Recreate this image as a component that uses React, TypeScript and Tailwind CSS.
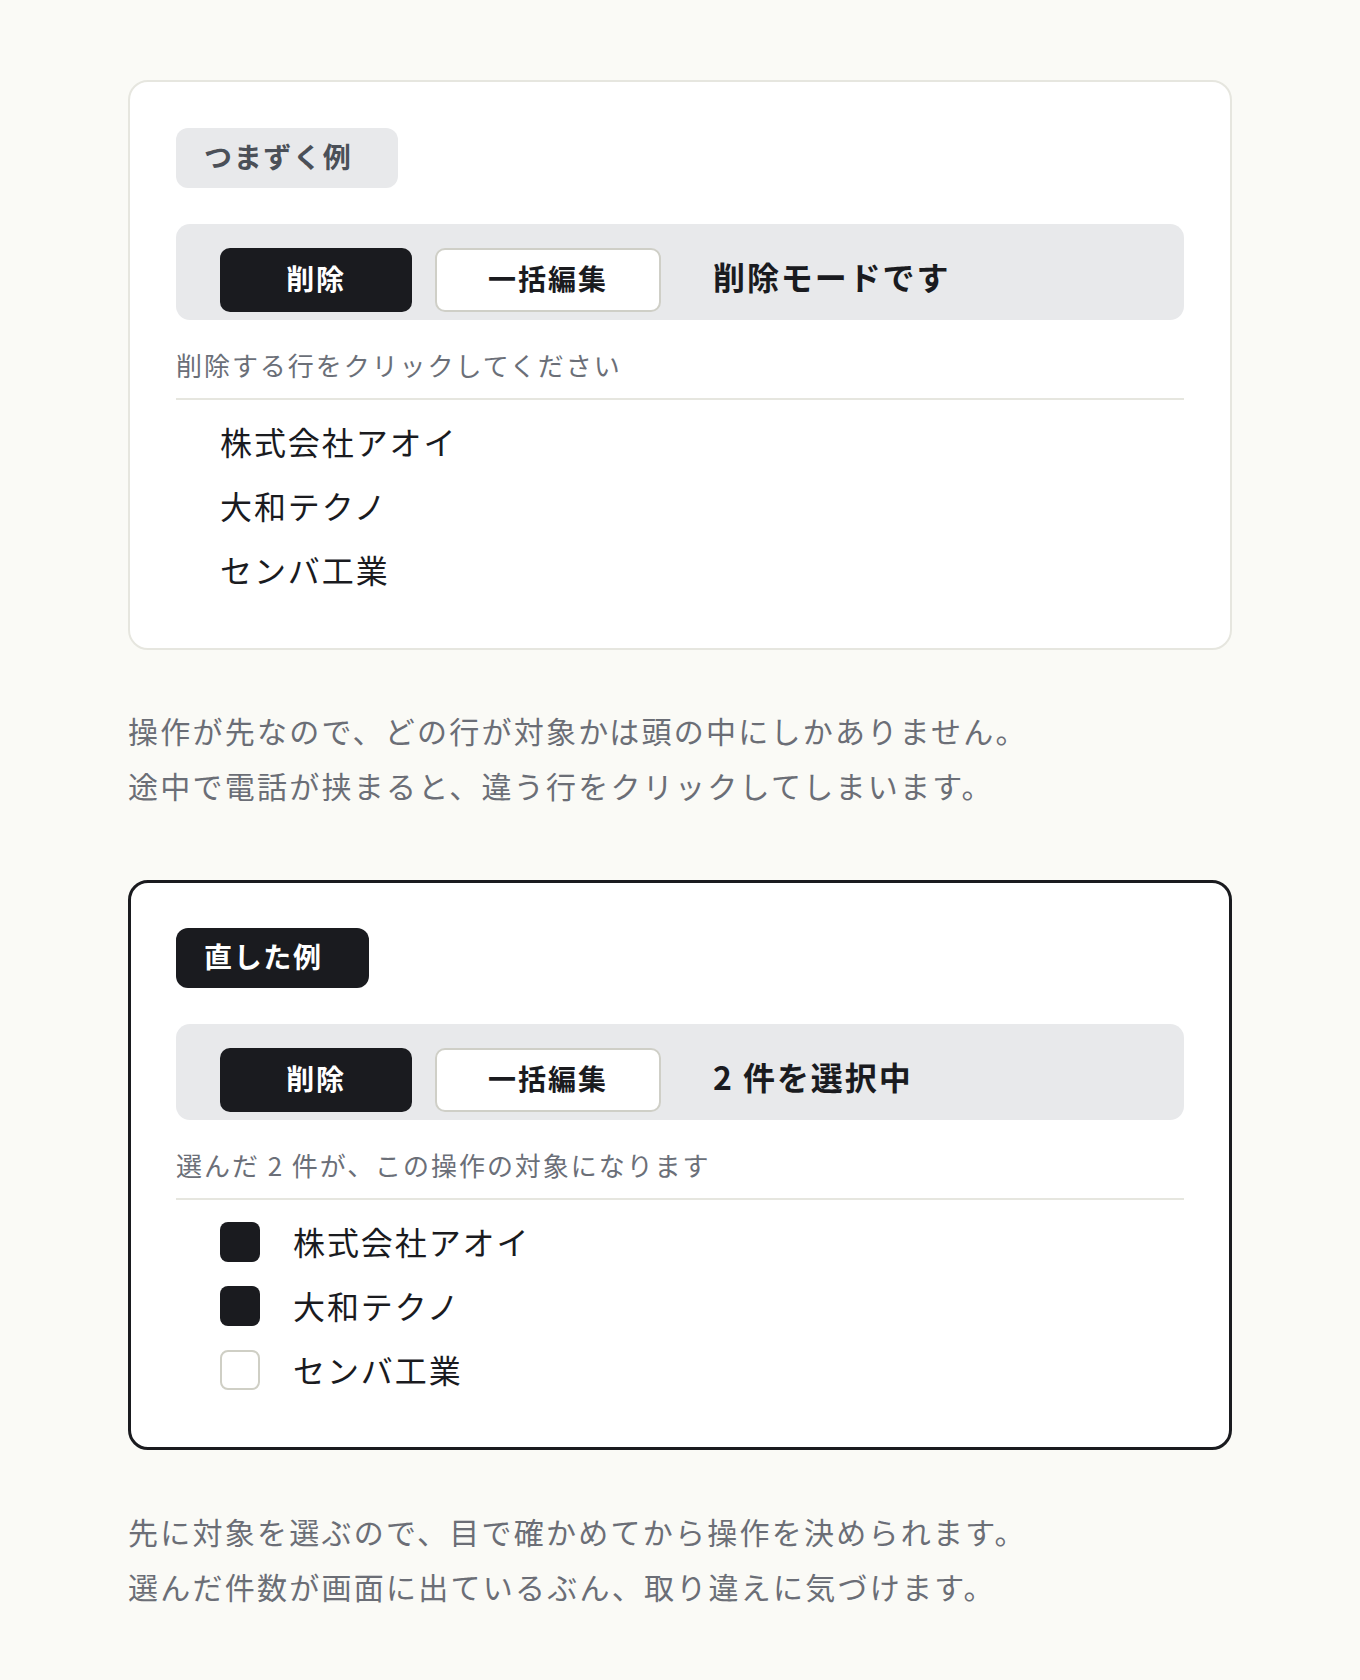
import { useState } from "react";

const companies = ["株式会社アオイ", "大和テクノ", "センバ工業"];

const Toolbar = ({ status }: { status: string }) => (
  <div className="flex items-center rounded-[14px] bg-[#e8e9eb] pl-[44px] pr-[44px] pt-[24px] pb-[8px]">
    <button className="h-[64px] w-[192px] rounded-[10px] bg-[#1a1b1f] pb-[4px] text-[28px] font-bold tracking-[0.06em] text-white">
      削除
    </button>
    <button className="ml-[23px] h-[64px] w-[226px] rounded-[10px] border-2 border-[#cfcfc7] bg-white pb-[4px] text-[28px] font-bold tracking-[0.07em] text-[#1a1b1f]">
      一括編集
    </button>
    <span className="ml-[52px] mb-[8px] text-[32px] font-bold tracking-[0.06em] text-[#1a1b1f]">{status}</span>
  </div>
);

const Before = () => (
  <div className="rounded-[20px] border-2 border-[#e6e6df] bg-white p-[46px]">
    <span className="inline-block h-[60px] rounded-[12px] bg-[#e8e9eb] pl-[28px] pr-[46px] text-[28px] font-bold leading-[56px] tracking-[0.06em] text-[#4b5058]">
      つまずく例
    </span>
    <div className="mt-[36px]">
      <Toolbar status="削除モードです" />
    </div>
    <p className="mt-[26px] border-b-2 border-[#e6e6df] pb-[14px] text-[26px] leading-[38px] tracking-[0.075em] text-[#6b6f78]">
      削除する行をクリックしてください
    </p>
    <ul className="pt-[10px] pl-[44px]">
      {companies.map((c) => (
        <li key={c} className="h-[64px] text-[32px] leading-[62px] tracking-[0.06em] text-[#1a1b1f]">
          {c}
        </li>
      ))}
    </ul>
  </div>
);

const After = () => {
  const [checked, setChecked] = useState<string[]>(["株式会社アオイ", "大和テクノ"]);

  const toggle = (c: string) =>
    setChecked((prev) => (prev.includes(c) ? prev.filter((x) => x !== c) : [...prev, c]));

  return (
    <div className="rounded-[20px] border-[3px] border-[#1a1b1f] bg-white p-[45px]">
      <span className="inline-block h-[60px] rounded-[12px] bg-[#1a1b1f] pl-[28px] pr-[46px] text-[28px] font-bold leading-[56px] tracking-[0.06em] text-white">
        直した例
      </span>
      <div className="mt-[36px]">
        <Toolbar status={`${checked.length} 件を選択中`} />
      </div>
      <p className="mt-[26px] border-b-2 border-[#e6e6df] pb-[14px] text-[26px] leading-[38px] tracking-[0.075em] text-[#6b6f78]">
        選んだ {checked.length} 件が、この操作の対象になります
      </p>
      <ul className="pt-[10px] pl-[44px]">
        {companies.map((c) => {
          const on = checked.includes(c);
          return (
            <li
              key={c}
              onClick={() => toggle(c)}
              className="flex h-[64px] cursor-pointer items-center gap-[33px] text-[32px] tracking-[0.06em] text-[#1a1b1f]"
            >
              <span
                className={
                  on
                    ? "h-[40px] w-[40px] shrink-0 rounded-[8px] bg-[#1a1b1f]"
                    : "h-[40px] w-[40px] shrink-0 rounded-[8px] border-2 border-[#cfcfc5] bg-white"
                }
              />
              <span className="pb-[2px] leading-[62px]">{c}</span>
            </li>
          );
        })}
      </ul>
    </div>
  );
};

const App = () => {
  return (
    <div
      className="min-h-[1680px] bg-[#fafaf6] pt-[80px] pb-[60px]"
      style={{ fontFamily: '"Noto Sans CJK JP", "Noto Sans", sans-serif' }}
    >
      <div className="mx-auto w-[1104px]">
        <Before />
        <p className="mt-[53px] text-[30px] leading-[55px] tracking-[0.075em] text-[#6b6e76]">
          操作が先なので、どの行が対象かは頭の中にしかありません。
          <br />
          途中で電話が挟まると、違う行をクリックしてしまいます。
        </p>
        <div className="mt-[67px]">
          <After />
        </div>
        <p className="mt-[54px] text-[30px] leading-[55px] tracking-[0.075em] text-[#6b6e76]">
          先に対象を選ぶので、目で確かめてから操作を決められます。
          <br />
          選んだ件数が画面に出ているぶん、取り違えに気づけます。
        </p>
      </div>
    </div>
  );
};

export default App;
